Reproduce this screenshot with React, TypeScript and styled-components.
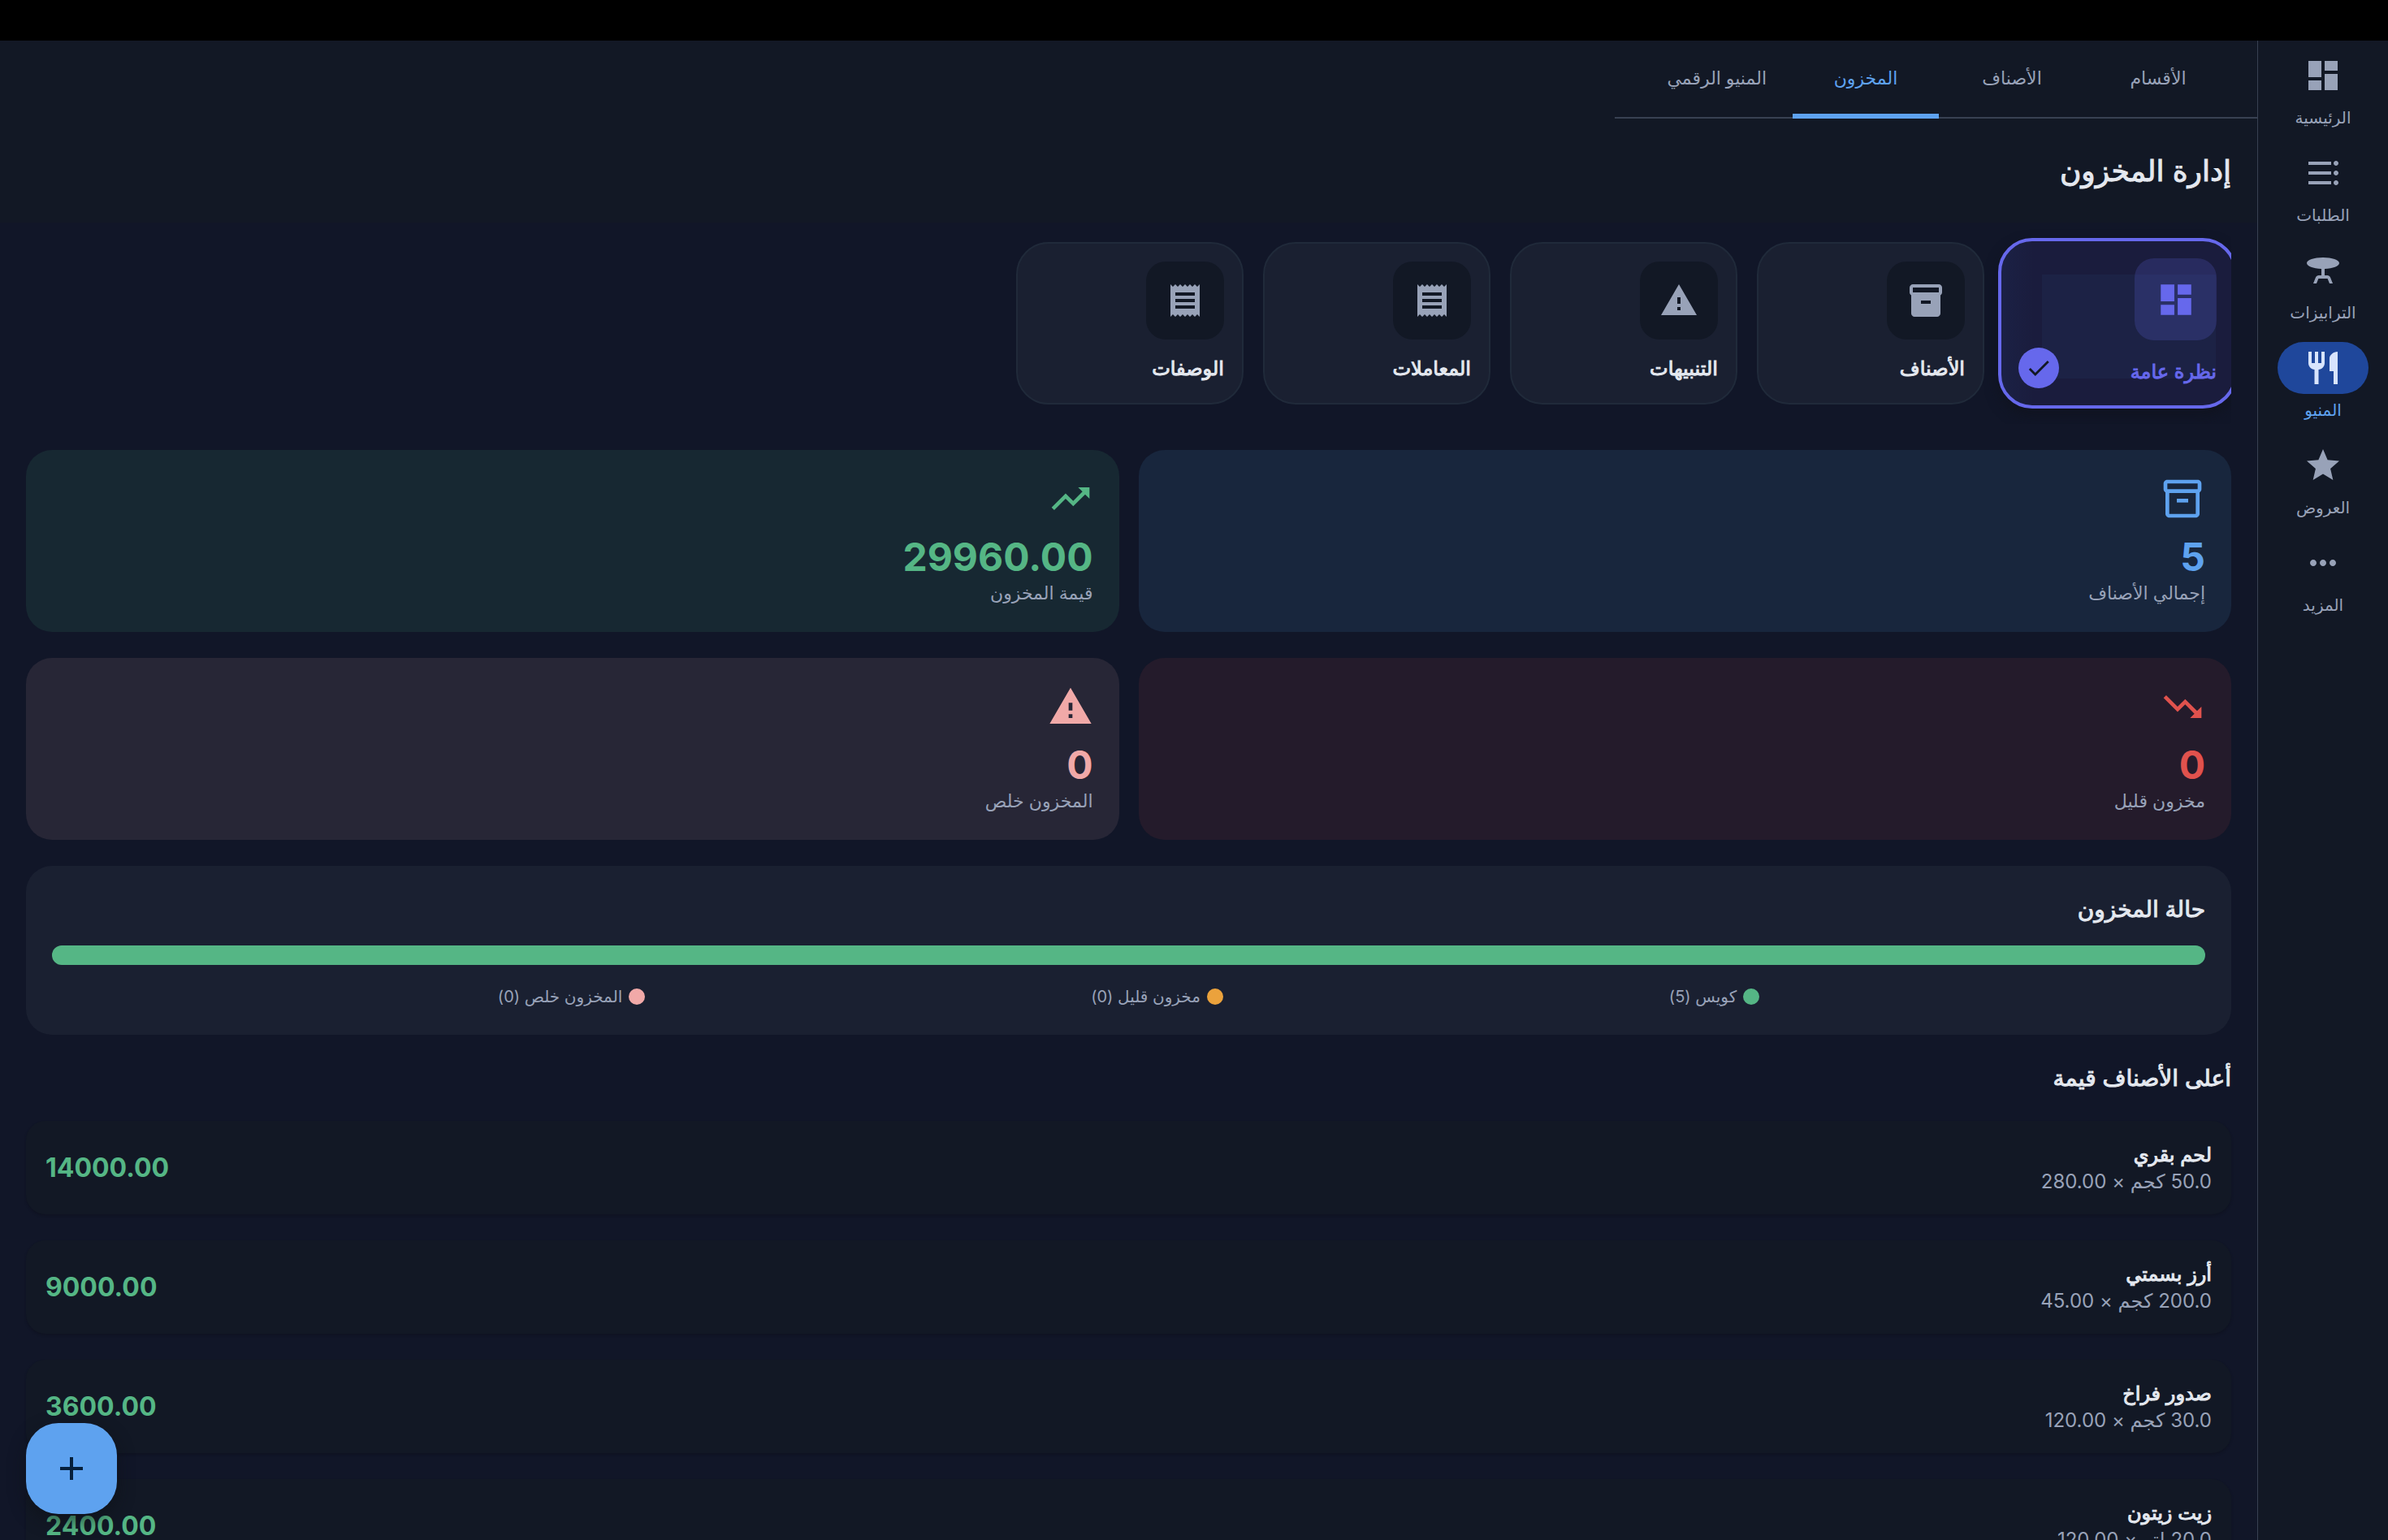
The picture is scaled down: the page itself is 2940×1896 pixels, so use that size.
import React from "react";
import styled, { createGlobalStyle, css } from "styled-components";
import {
  MdAdd,
  MdCheck,
  MdDashboard,
  MdFormatListBulleted,
  MdInventory2,
  MdMoreHoriz,
  MdOutlineInventory2,
  MdReceipt,
  MdRestaurant,
  MdStar,
  MdTableBar,
  MdTrendingDown,
  MdTrendingUp,
  MdWarning,
} from "react-icons/md";

const color = {
  page: "#111628",
  bar: "#121825",
  card: "#1a2031",
  tile: "#121825",
  line: "#384152",
  cardLine: "#202a3a",
  text: "#e4e8ef",
  muted: "#98a2b8",
  blue: "#5ea2ef",
  green: "#55b685",
  red: "#e0524d",
  pink: "#f1a9a8",
  orange: "#eba23c",
  indigo: "#6668ec",
};

/* Semi-bold Arabic: the regular face with a thin outline. */
const semiBold = css`
  font-weight: 400;
  -webkit-text-stroke: 1px currentColor;
`;

const GlobalStyle = createGlobalStyle`
  * { box-sizing: border-box; }
  body {
    margin: 0;
    background: ${color.page};
    color: ${color.text};
    font-family: Inter, "DejaVu Sans", sans-serif;
    font-size: 24px;
    font-optical-sizing: none;
  }
  h1, h2, h3, p, ul { margin: 0; padding: 0; }
  ul { list-style: none; }
  button { font: inherit; color: inherit; border: 0; background: none; padding: 0; cursor: pointer; }
`;

const Screen = styled.div`
  height: 100vh;
  display: flex;
  flex-direction: column;
  overflow: hidden;
`;

const StatusStrip = styled.div`
  flex: none;
  height: 50px;
  background: #000;
`;

const Shell = styled.div`
  flex: 1;
  min-height: 0;
  display: flex;
`;

const Rail = styled.nav`
  flex: none;
  width: 161px;
  padding-top: 11px;
  display: flex;
  flex-direction: column;
  background: ${color.bar};
  border-inline-end: 1px solid ${color.line};
`;

const RailItem = styled.button<{ $active?: boolean }>`
  height: 120px;
  display: flex;
  flex-direction: column;
  align-items: center;
  gap: 4px;
  font-size: 20px;
  line-height: 32px;
  color: ${(p) => (p.$active ? color.blue : color.muted)};
`;

const RailPill = styled.span<{ $active?: boolean }>`
  width: 112px;
  height: 64px;
  display: grid;
  place-items: center;
  border-radius: 32px;
  font-size: 48px;
  background: ${(p) => (p.$active ? "#1f479b" : "transparent")};
  color: ${(p) => (p.$active ? "#d8e4fd" : color.muted)};
`;

const MirroredList = styled(MdFormatListBulleted)`
  transform: scaleX(-1);
`;

const Main = styled.main`
  position: relative;
  flex: 1;
  min-width: 0;
  display: flex;
  flex-direction: column;
  overflow: hidden;
`;

const Header = styled.header`
  flex: none;
  display: flex;
  flex-direction: column;
  align-items: flex-start;
  background: ${color.bar};
`;

const Tabs = styled.div`
  display: flex;
  padding: 0 32px;
  box-shadow: inset 0 -2px ${color.line};
`;

const Tab = styled.button<{ $active?: boolean }>`
  min-width: 180px;
  height: 96px;
  padding: 0 32px 4px;
  font-size: 22px;
  font-weight: 500;
  color: ${(p) => (p.$active ? color.blue : color.muted)};
  box-shadow: ${(p) => (p.$active ? `inset 0 -6px ${color.blue}` : "none")};
`;

const Title = styled.h1`
  padding: 0 32px;
  font-size: 36px;
  line-height: 128px;
  ${semiBold}
`;

const Filters = styled.div`
  flex: none;
  height: 248px;
  margin: 0 32px;
  display: flex;
  align-items: center;
  gap: 24px;
  overflow: hidden;
`;

const FilterCard = styled.button<{ $active?: boolean }>`
  flex: none;
  width: ${(p) => (p.$active ? 294 : 280)}px;
  height: ${(p) => (p.$active ? 210 : 200)}px;
  margin: 0 ${(p) => (p.$active ? -7 : 0)}px;
  padding: ${(p) => (p.$active ? 21 : 22)}px;
  display: flex;
  flex-direction: column;
  justify-content: space-between;
  border: ${(p) => (p.$active ? `4px solid ${color.indigo}` : `2px solid ${color.cardLine}`)};
  border-radius: ${(p) => (p.$active ? 42 : 40)}px;
  background: ${(p) =>
    p.$active
      ? "linear-gradient(#1c2245, #1c2245) 50px 41px / 214px 128px no-repeat, linear-gradient(90deg, #1b2145, #1a1c3d 40px)"
      : color.card};
  color: ${(p) => (p.$active ? color.indigo : color.text)};
  box-shadow: ${(p) => (p.$active ? "0 8px 16px rgba(15, 18, 28, 0.7)" : "none")};
`;

const FilterIcon = styled.span<{ $active?: boolean }>`
  width: ${(p) => (p.$active ? 101 : 96)}px;
  height: ${(p) => (p.$active ? 101 : 96)}px;
  display: grid;
  place-items: center;
  border-radius: 24px;
  font-size: ${(p) => (p.$active ? 50 : 48)}px;
  background: ${(p) => (p.$active ? "rgba(102, 104, 236, 0.2)" : color.tile)};
  color: ${(p) => (p.$active ? color.indigo : color.muted)};
`;

const FilterFoot = styled.span`
  height: 50px;
  display: flex;
  align-items: flex-end;
  justify-content: space-between;
  font-size: 24px;
  line-height: 40px;
  ${semiBold}
`;

const CheckBadge = styled.span`
  width: 50px;
  height: 50px;
  display: grid;
  place-items: center;
  border-radius: 50%;
  font-size: 34px;
  background: ${color.indigo};
  color: #121825;
`;

const Body = styled.div`
  padding: 32px;
  display: flex;
  flex-direction: column;
  gap: 32px;
`;

const StatGrid = styled.section`
  display: grid;
  grid-template-columns: 1fr 1fr;
  gap: 32px 24px;
`;

const Stat = styled.article<{ $bg: string; $fg: string }>`
  padding: 32px;
  border-radius: 32px;
  background: ${(p) => p.$bg};
  color: ${(p) => p.$fg};
  svg { display: block; font-size: 56px; margin-bottom: 16px; }
`;

const StatValue = styled.p`
  font-size: 48px;
  line-height: 56px;
  font-weight: 700;
`;

const StatLabel = styled.p`
  font-size: 22px;
  line-height: 32px;
  color: ${color.muted};
`;

const Health = styled.section`
  padding: 32px;
  border-radius: 32px;
  background: ${color.card};
`;

const SectionTitle = styled.h2`
  font-size: 28px;
  line-height: 42px;
  ${semiBold}
`;

const Meter = styled.div`
  height: 24px;
  margin: 24px 0;
  display: flex;
  border-radius: 12px;
  overflow: hidden;
`;

const MeterPart = styled.span<{ $tone: string; $share: number }>`
  flex: ${(p) => p.$share} 0 0;
  background: ${(p) => p.$tone};
`;

const Legend = styled.ul`
  display: flex;
  justify-content: space-evenly;
`;

const LegendItem = styled.li`
  display: flex;
  align-items: center;
  gap: 8px;
  font-size: 20px;
  line-height: 30px;
  color: ${color.muted};
`;

const Dot = styled.span<{ $tone: string }>`
  width: 20px;
  height: 20px;
  border-radius: 50%;
  background: ${(p) => p.$tone};
`;

const ItemList = styled.ul`
  display: flex;
  flex-direction: column;
  gap: 32px;
`;

const Item = styled.li`
  height: 115px;
  padding: 24px;
  display: flex;
  align-items: center;
  justify-content: space-between;
  border-radius: 24px;
  background: ${color.bar};
  box-shadow: 0 2px 3px rgba(12, 16, 26, 0.4);
`;

const ItemName = styled.h3`
  font-size: 24px;
  line-height: 34px;
  ${semiBold}
`;

const ItemMeta = styled.p`
  font-size: 24px;
  line-height: 32px;
  color: ${color.muted};
`;

const Amount = styled.strong`
  font-size: 32px;
  font-weight: 700;
  color: ${color.green};
`;

const AddButton = styled.button`
  position: absolute;
  left: 32px;
  bottom: 32px;
  width: 112px;
  height: 112px;
  display: grid;
  place-items: center;
  border-radius: 40px;
  font-size: 48px;
  background: ${color.blue};
  color: #06203c;
  box-shadow: 0 8px 20px rgba(14, 16, 22, 0.6);
`;

const railItems = [
  { label: "الرئيسية", Icon: MdDashboard },
  { label: "الطلبات", Icon: MirroredList },
  { label: "الترابيزات", Icon: MdTableBar },
  { label: "المنيو", Icon: MdRestaurant, active: true },
  { label: "العروض", Icon: MdStar },
  { label: "المزيد", Icon: MdMoreHoriz },
];

const tabs = ["الأقسام", "الأصناف", "المخزون", "المنيو الرقمي"];

const filters = [
  { label: "نظرة عامة", Icon: MdDashboard, active: true },
  { label: "الأصناف", Icon: MdInventory2 },
  { label: "التنبيهات", Icon: MdWarning },
  { label: "المعاملات", Icon: MdReceipt },
  { label: "الوصفات", Icon: MdReceipt },
];

const stats = [
  { label: "إجمالي الأصناف", value: "5", Icon: MdOutlineInventory2, bg: "#18263d", fg: color.blue },
  { label: "قيمة المخزون", value: "29960.00", Icon: MdTrendingUp, bg: "#172832", fg: color.green },
  { label: "مخزون قليل", value: "0", Icon: MdTrendingDown, bg: "#241b2b", fg: color.red },
  { label: "المخزون خلص", value: "0", Icon: MdWarning, bg: "#272636", fg: color.pink },
];

const health = [
  { label: "كويس", count: 5, tone: color.green },
  { label: "مخزون قليل", count: 0, tone: color.orange },
  { label: "المخزون خلص", count: 0, tone: color.pink },
];

const items = [
  { name: "لحم بقري", meta: "50.0 كجم × 280.00", total: "14000.00" },
  { name: "أرز بسمتي", meta: "200.0 كجم × 45.00", total: "9000.00" },
  { name: "صدور فراخ", meta: "30.0 كجم × 120.00", total: "3600.00" },
  { name: "زيت زيتون", meta: "20.0 لتر × 120.00", total: "2400.00" },
];

export default function App() {
  return (
    <Screen dir="rtl" lang="ar">
      <GlobalStyle />
      <StatusStrip />
      <Shell>
        <Rail>
          {railItems.map(({ label, Icon, active }) => (
            <RailItem key={label} $active={active}>
              <RailPill $active={active}>
                <Icon />
              </RailPill>
              {label}
            </RailItem>
          ))}
        </Rail>
        <Main>
          <Header>
            <Tabs role="tablist">
              {tabs.map((tab) => (
                <Tab key={tab} role="tab" aria-selected={tab === "المخزون"} $active={tab === "المخزون"}>
                  {tab}
                </Tab>
              ))}
            </Tabs>
            <Title>إدارة المخزون</Title>
          </Header>
          <Filters>
            {filters.map(({ label, Icon, active }) => (
              <FilterCard key={label} $active={active}>
                <FilterIcon $active={active}>
                  <Icon />
                </FilterIcon>
                <FilterFoot>
                  {label}
                  {active && (
                    <CheckBadge>
                      <MdCheck />
                    </CheckBadge>
                  )}
                </FilterFoot>
              </FilterCard>
            ))}
          </Filters>
          <Body>
            <StatGrid>
              {stats.map(({ label, value, Icon, bg, fg }) => (
                <Stat key={label} $bg={bg} $fg={fg}>
                  <Icon />
                  <StatValue>{value}</StatValue>
                  <StatLabel>{label}</StatLabel>
                </Stat>
              ))}
            </StatGrid>
            <Health>
              <SectionTitle>حالة المخزون</SectionTitle>
              <Meter>
                {health.map(({ label, count, tone }) => (
                  <MeterPart key={label} $tone={tone} $share={count} />
                ))}
              </Meter>
              <Legend>
                {health.map(({ label, count, tone }) => (
                  <LegendItem key={label}>
                    <Dot $tone={tone} />
                    {`${label} (${count})`}
                  </LegendItem>
                ))}
              </Legend>
            </Health>
            <SectionTitle>أعلى الأصناف قيمة</SectionTitle>
            <ItemList>
              {items.map(({ name, meta, total }) => (
                <Item key={name}>
                  <div>
                    <ItemName>{name}</ItemName>
                    <ItemMeta>{meta}</ItemMeta>
                  </div>
                  <Amount>{total}</Amount>
                </Item>
              ))}
            </ItemList>
          </Body>
          <AddButton aria-label="إضافة">
            <MdAdd />
          </AddButton>
        </Main>
      </Shell>
    </Screen>
  );
}
